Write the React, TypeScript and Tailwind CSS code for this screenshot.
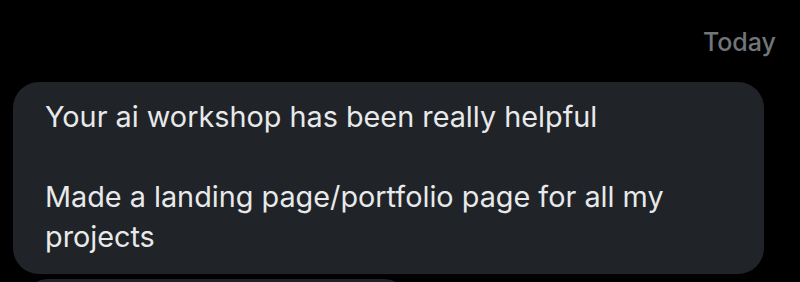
export default function App() {
  return (
    <div
      className="w-[800px] h-[282px] overflow-hidden bg-black"
      style={{ fontFamily: 'Inter, "Noto Sans", sans-serif' }}
    >
      <div className="flex justify-end pt-[26px] pr-[24px] h-[82px]">
        <span className="text-[25px] leading-[32px] font-medium text-[#71767b]">Today</span>
      </div>
      <div className="pl-[13px] pr-[36px] flex flex-col gap-[5px]">
        <div className="rounded-[26px] bg-[#202327] pl-[32px] pr-[24px] pt-[15px] pb-[17px] text-[28.8px] leading-[40px] text-[#e7e9ea]">
          <p>Your ai workshop has been really helpful</p>
          <p>&nbsp;</p>
          <p>Made a landing page/portfolio page for all my projects</p>
        </div>
        <div className="ml-[14px] w-[378px] h-[40px] rounded-[26px] bg-[#202327]" />
      </div>
    </div>
  );
}
